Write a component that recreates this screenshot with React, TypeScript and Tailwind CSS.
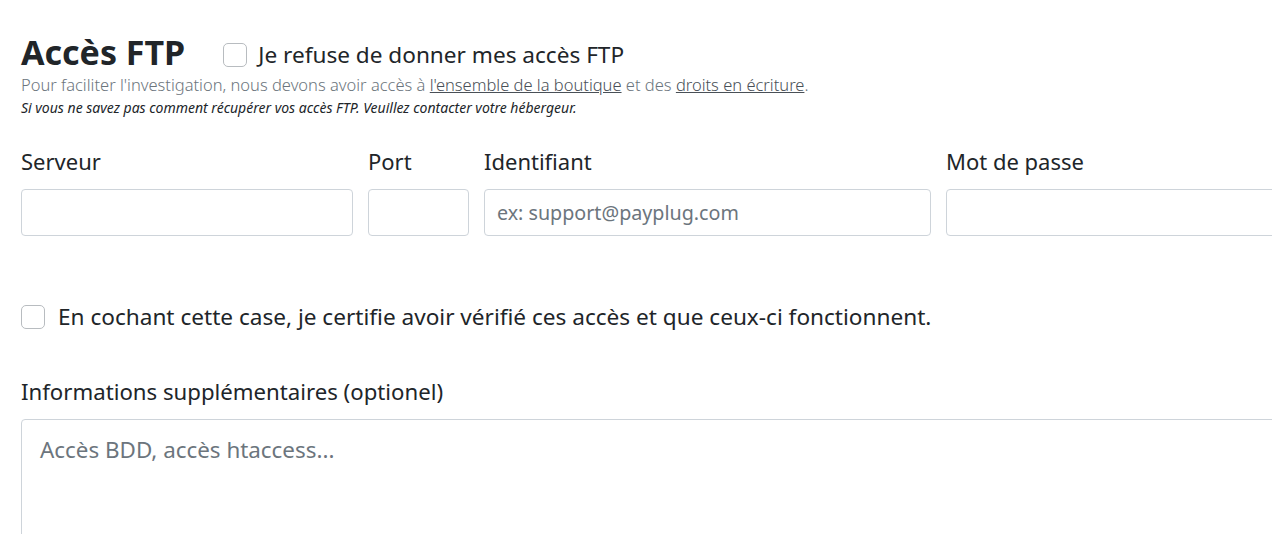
export default function App() {
  const box =
    "appearance-none w-[24px] h-[24px] shrink-0 rounded-[5px] border border-[#b8bcc0] bg-white";
  const input =
    "h-[47px] w-full rounded-[4px] border border-[#ced4da] bg-white px-[12px] text-[19.7px] text-[#495057] placeholder:text-[#6c757d] outline-none";
  const label = "mb-[13px] text-[22px] leading-[30px]";

  return (
    <div className="h-[534px] w-[1272px] overflow-hidden bg-white">
      <div className="w-[1420px] px-[21px] pt-[32px] font-['Noto_Sans',sans-serif] text-[#212529]">
        <div className="flex items-center gap-[38px]">
          <h2 className="text-[34px] font-bold leading-[40px]">Accès FTP</h2>
          <label className="flex items-center gap-[11px] pt-[6px] text-[22.6px] leading-[28px]">
            <input type="checkbox" className={box} />
            Je refuse de donner mes accès FTP
          </label>
        </div>

        <p className="mt-[2px] text-[16.5px] font-light leading-[22px] text-[#6c757d]">
          Pour faciliter l'investigation, nous devons avoir accès à{" "}
          <u className="text-[#495057]">l'ensemble de la boutique</u> et des{" "}
          <u className="text-[#495057]">droits en écriture</u>.
        </p>
        <p className="mt-[2px] text-[14px] italic leading-[20px]">
          Si vous ne savez pas comment récupérer vos accès FTP. Veuillez contacter votre hébergeur.
        </p>

        <div className="mt-[28px] flex gap-[15px]">
          <div className="w-[332px]">
            <div className={label}>Serveur</div>
            <input className={input} />
          </div>
          <div className="w-[101px]">
            <div className={label}>Port</div>
            <input className={input} />
          </div>
          <div className="w-[447px]">
            <div className={label}>Identifiant</div>
            <input className={input} placeholder="ex: support@payplug.com" />
          </div>
          <div className="w-[447px]">
            <div className={label}>Mot de passe</div>
            <input type="password" className={input} />
          </div>
        </div>

        <label className="mt-[67px] flex items-center gap-[13px] text-[22.6px] leading-[28px]">
          <input type="checkbox" className={box} />
          En cochant cette case, je certifie avoir vérifié ces accès et que ceux-ci fonctionnent.
        </label>

        <div className="mt-[46px] mb-[12px] text-[22.2px] leading-[30px]">
          Informations supplémentaires (optionel)
        </div>
        <textarea
          className="h-[160px] w-full resize-none rounded-[4px] border border-[#ced4da] px-[18px] py-[15px] text-[22.4px] leading-[30px] text-[#495057] placeholder:text-[#6c757d] outline-none"
          placeholder="Accès BDD, accès htaccess..."
        />
      </div>
    </div>
  );
}
